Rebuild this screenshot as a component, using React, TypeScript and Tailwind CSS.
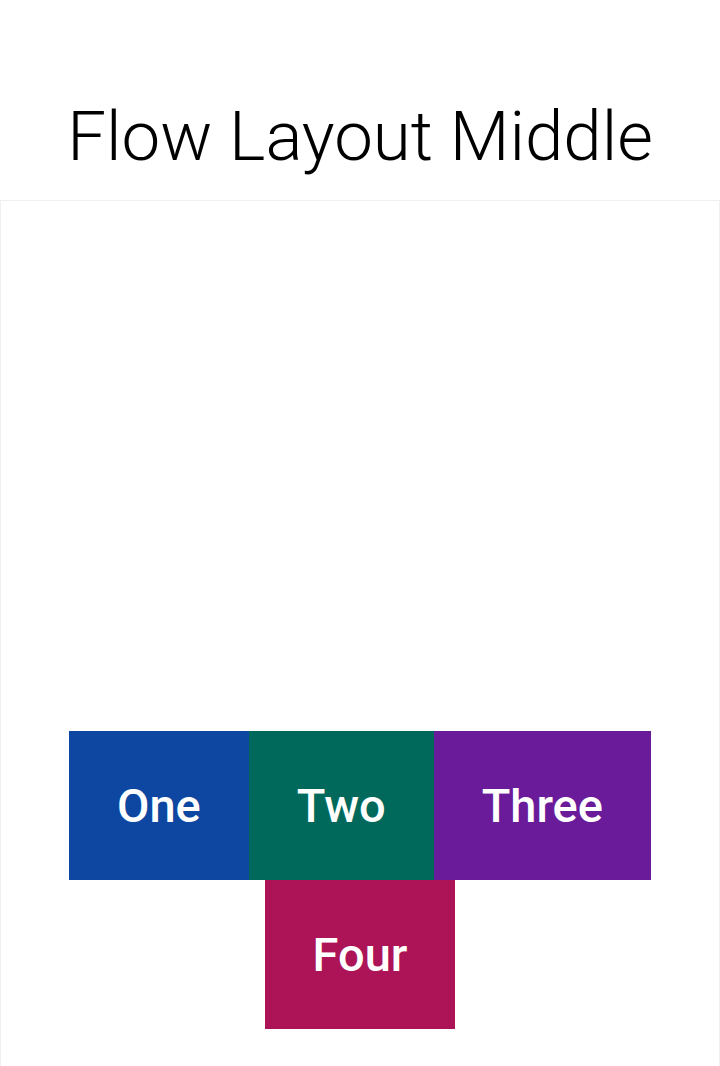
const items = [
  { label: "One", bg: "bg-[#0d47a1]" },
  { label: "Two", bg: "bg-[#00695c]" },
  { label: "Three", bg: "bg-[#6a1b9a]" },
  { label: "Four", bg: "bg-[#ad1457]" },
];

function Tile({ label, bg }: { label: string; bg: string }) {
  return (
    <div
      className={`${bg} px-12 py-12 text-[47px] leading-[53px] font-medium text-white`}
    >
      {label}
    </div>
  );
}

export default function App() {
  return (
    <div
      className="flex flex-col bg-white h-[1066px] overflow-hidden"
      style={{ fontFamily: "Roboto, 'Noto Sans', sans-serif" }}
    >
      <header className="h-[200px] shrink-0 flex items-center justify-center pt-[96px] pb-[24px]">
        <h1 className="text-[69px] leading-none font-light text-black">
          Flow Layout Middle
        </h1>
      </header>
      <section className="flex-1 border border-b-0 border-[#f0f0f2] flex flex-col justify-end pb-[37px]">
        <div className="flex flex-wrap justify-center mx-auto w-[600px]">
          {items.map((it) => (
            <Tile key={it.label} label={it.label} bg={it.bg} />
          ))}
        </div>
      </section>
    </div>
  );
}
